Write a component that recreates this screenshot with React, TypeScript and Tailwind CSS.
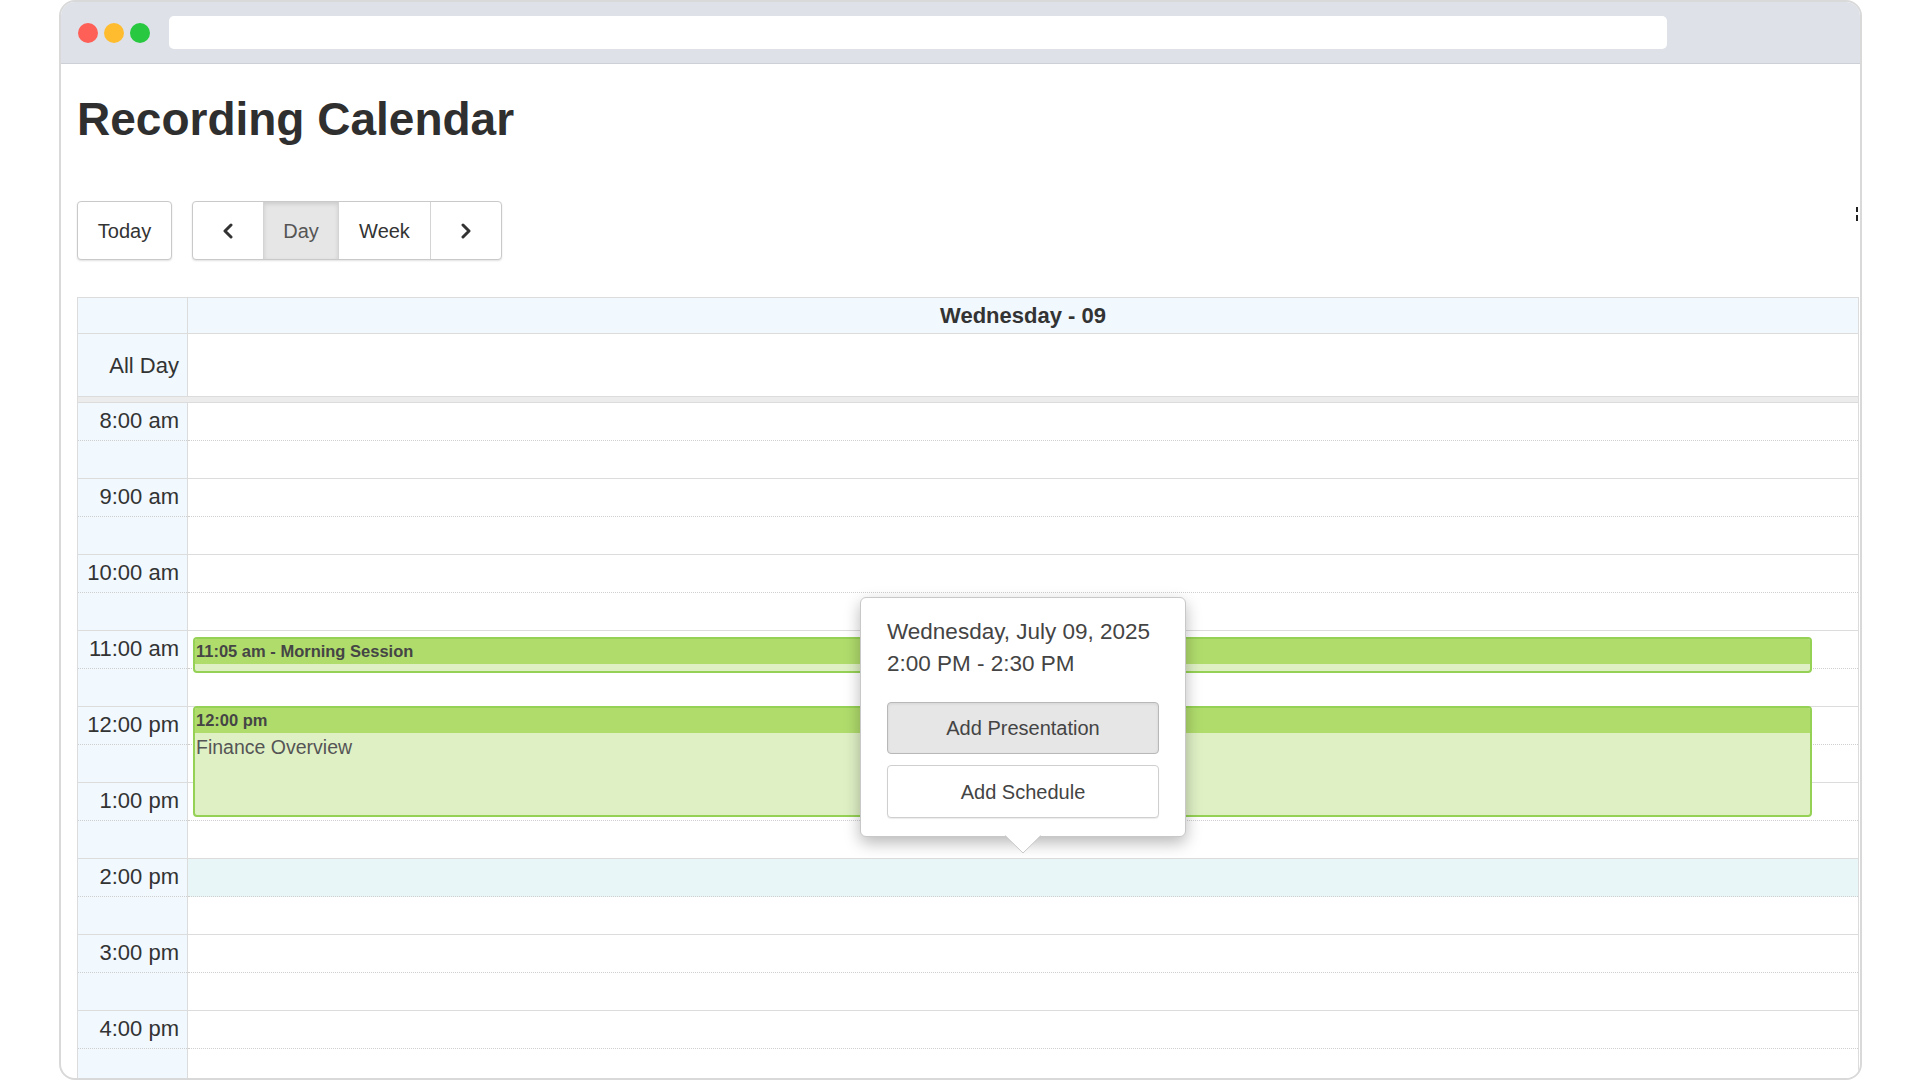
import React from "react";

const hours = ["8:00 am", "9:00 am", "10:00 am", "11:00 am", "12:00 pm", "1:00 pm", "2:00 pm", "3:00 pm", "4:00 pm"];

// two half-hour slots per hour, 38px each
const slots = hours.flatMap((label, i) => [
  { key: `${i}a`, label, half: false, index: i * 2 },
  { key: `${i}b`, label: "", half: true, index: i * 2 + 1 },
]);

const Chevron = ({ dir }: { dir: "left" | "right" }) => (
  <svg width="14" height="16" viewBox="0 0 14 16" fill="none">
    <polyline
      points={dir === "left" ? "10,2 4,8 10,14" : "4,2 10,8 4,14"}
      stroke="#333"
      strokeWidth="3"
      strokeLinecap="round"
      strokeLinejoin="round"
    />
  </svg>
);

const Toolbar = () => (
  <div className="flex items-stretch h-[59px] mt-[55px]">
    <button className="w-[95px] border border-[#c9c9c9] rounded-[4px] bg-white text-[20px] text-[#333] shadow-[0_1px_2px_rgba(0,0,0,0.12)]">
      Today
    </button>
    <div className="ml-[20px] flex border border-[#c9c9c9] rounded-[4px] bg-white overflow-hidden shadow-[0_1px_2px_rgba(0,0,0,0.12)]">
      <button className="w-[71px] border-r border-[#d4d4d4] flex items-center justify-center">
        <Chevron dir="left" />
      </button>
      <button className="w-[75px] border-r border-[#d4d4d4] bg-[#e6e6e6] shadow-[inset_0_2px_4px_rgba(0,0,0,0.12)] text-[20px] text-[#555]">
        Day
      </button>
      <button className="w-[92px] border-r border-[#d4d4d4] text-[20px] text-[#333]">Week</button>
      <button className="w-[70px] flex items-center justify-center">
        <Chevron dir="right" />
      </button>
    </div>
    {/* bit of a clipped control peeking at the right edge */}
    <div className="ml-auto mr-[1px] mt-[6px] self-start flex flex-col gap-[3px]">
      <span className="w-[2px] h-[5px] bg-[#222]" />
      <span className="w-[2px] h-[6px] bg-[#222]" />
    </div>
  </div>
);

const Popover = () => (
  <div className="absolute left-[672px] top-[194px] w-[326px] bg-white border border-[#c8c8c8] rounded-[6px] shadow-[0_6px_16px_rgba(0,0,0,0.28)] px-[26px] pt-[18px] pb-[18px] z-20">
    <div className="text-[22.5px] leading-[32px] text-[#444]">
      <div>Wednesday, July 09, 2025</div>
      <div>2:00 PM - 2:30 PM</div>
    </div>
    <button className="mt-[22px] w-full h-[52px] rounded-[4px] border border-[#b8b8b8] bg-[#e6e6e6] text-[20px] text-[#444] shadow-[inset_0_1px_3px_rgba(0,0,0,0.08)]">
      Add Presentation
    </button>
    <button className="mt-[11px] w-full h-[53px] rounded-[4px] border border-[#cfcfcf] bg-white text-[20px] text-[#444] shadow-[0_1px_1px_rgba(0,0,0,0.08)]">
      Add Schedule
    </button>
    <svg className="absolute left-1/2 -translate-x-1/2 top-full -mt-px" width="36" height="19" viewBox="0 0 36 19">
      <path d="M0 0 L18 18 L36 0 Z" fill="#fff" />
      <path d="M0 0.5 L18 18 L36 0.5" fill="none" stroke="#c8c8c8" strokeWidth="1" />
    </svg>
  </div>
);

const DayColumn = () => (
  <div className="flex-1 relative">
    {slots.map((s) => (
      <div
        key={s.key}
        className={`h-[38px] border-b ${s.half ? "border-solid border-[#dcdcdc]" : "border-dotted border-[#cfcfcf]"} ${s.index === 12 ? "bg-[#e9f6f8]" : "bg-white"}`}
      />
    ))}

    <div className="absolute left-[5px] right-[46px] top-[234px] h-[36px] rounded-[4px] border-2 border-[#95d154] bg-[#dff0c5] overflow-hidden">
      <div className="h-[25px] bg-[#b0dc6c] px-[1px] flex items-center text-[16.5px] font-bold text-[#454545]">
        11:05 am - Morning Session
      </div>
    </div>

    <div className="absolute left-[5px] right-[46px] top-[303px] h-[111px] rounded-[4px] border-2 border-[#95d154] bg-[#dff0c5] overflow-hidden">
      <div className="h-[25px] bg-[#b0dc6c] px-[1px] flex items-center text-[16.5px] font-bold text-[#454545]">12:00 pm</div>
      <div className="px-[1px] pt-[2px] text-[19.5px] leading-[24px] text-[#555]">Finance Overview</div>
    </div>

    <Popover />
  </div>
);

const Calendar = () => (
  <div className="mt-[37px] border border-b-0 border-[#dcdcdc]">
    <div className="flex h-[36px] border-b border-[#dcdcdc] bg-[#f1f8fe]">
      <div className="w-[110px] border-r border-[#dcdcdc]" />
      <div className="flex-1 flex items-center justify-center text-[22px] font-bold text-[#333]">Wednesday - 09</div>
    </div>
    <div className="flex h-[63px] border-b border-[#dcdcdc]">
      <div className="w-[110px] border-r border-[#dcdcdc] bg-[#f1f8fe] flex items-center justify-end pr-[8px] text-[22px] text-[#333]">
        All Day
      </div>
      <div className="flex-1 bg-white" />
    </div>
    <div className="h-[6px] bg-[#ececec] border-b border-[#dcdcdc]" />
    <div className="flex">
      <div className="w-[110px] border-r border-[#dcdcdc] bg-[#f1f8fe]">
        {slots.map((s) => (
          <div
            key={s.key}
            className={`h-[38px] border-b ${s.half ? "border-solid border-[#dcdcdc]" : "border-dotted border-[#cfcfcf]"} text-right pr-[8px] pt-[5px] text-[22px] leading-[26px] text-[#333]`}
          >
            {s.label}
          </div>
        ))}
      </div>
      <DayColumn />
    </div>
  </div>
);

export default function App() {
  return (
    <div className="min-h-screen bg-white pl-[59px] font-['Liberation_Sans',Arial,sans-serif]">
      <div className="w-[1803px] h-[1080px] rounded-[16px] border-2 border-[#d9d9d9] overflow-hidden flex flex-col bg-white">
        <div className="h-[62px] shrink-0 bg-[#dee2e8] border-b border-[#cdd1d6] flex items-center pl-[17px]">
          <div className="flex gap-[6px]">
            <span className="w-[20px] h-[20px] rounded-full bg-[#fe5f57]" />
            <span className="w-[20px] h-[20px] rounded-full bg-[#febc2e]" />
            <span className="w-[20px] h-[20px] rounded-full bg-[#28c840]" />
          </div>
          <div className="ml-[19px] w-[1498px] h-[33px] bg-white rounded-[5px]" />
        </div>

        <div className="flex-1 min-h-0 pl-[16px] pr-[1px]">
          <h1 className="mt-[28px] text-[46px] leading-[54px] font-bold text-[#2f2f2f]">Recording Calendar</h1>
          <Toolbar />
          <Calendar />
        </div>
      </div>
    </div>
  );
}
